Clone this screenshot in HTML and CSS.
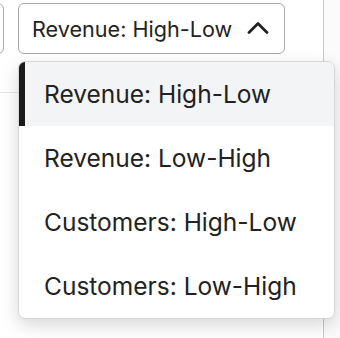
FILE: index.html
```html
<!DOCTYPE html>
<html lang="en">
  <head>
    <meta charset="UTF-8" />
    <meta name="viewport" content="width=device-width, initial-scale=1.0" />
    <title>Sort Menu</title>
    <link rel="stylesheet" href="styles.css">
  </head>
  <body>
    <div class="page">
      <div class="main">
        <div class="toolbar">
          <button class="btn btn-prev" type="button" aria-label="Filter"></button>
          <div class="sort">
            <button class="btn sort-btn" type="button">
              <span class="sort-label">Revenue: High-Low</span>
              <svg class="chevron" width="22" height="13" viewBox="0 0 22 13">
                <path d="M2 11.5 L11 2.5 L20 11.5" fill="none" stroke="#222" stroke-width="2.8" stroke-linecap="round" stroke-linejoin="round" />
              </svg>
            </button>
            <ul class="menu">
              <li class="menu-item active">Revenue: High-Low</li>
              <li class="menu-item">Revenue: Low-High</li>
              <li class="menu-item">Customers: High-Low</li>
              <li class="menu-item">Customers: Low-High</li>
            </ul>
          </div>
        </div>
        <div class="header-row"></div>
      </div>
      <div class="side"></div>
    </div>
  </body>
</html>
```

FILE: styles.css
```css
* {
  margin: 0;
  padding: 0;
  box-sizing: border-box;
  font-family: Inter, "Noto Sans", sans-serif;
}
body {
  background: white;
  color: #222;
  overflow: hidden;
}
.page {
  display: flex;
  width: 340px;
  height: 338px;
}
.main {
  width: 324px;
  border-right: 1px solid #c8c8c8;
}
.side {
  flex: 1;
  background: #fbfbfb;
}
.toolbar {
  display: flex;
  gap: 14px;
  padding-top: 3px;
  height: 93px;
  border-bottom: 1px solid #e6e6e6;
}
.btn {
  height: 51px;
  border: 1px solid #a8a8a8;
  border-radius: 6px;
  background: white;
  color: #222;
  font-size: 21.6px;
  cursor: pointer;
}
.btn-prev {
  width: 80px;
  margin-left: -76px;
}
.sort {
  position: relative;
}
.sort-btn {
  display: flex;
  align-items: center;
  justify-content: space-between;
  width: 267px;
  padding: 0 15px 0 13px;
}
.sort-label {
  white-space: nowrap;
}
.chevron {
  flex-shrink: 0;
  margin-top: -2px;
}
.menu {
  position: absolute;
  top: 58px;
  left: 0;
  width: 317px;
  list-style: none;
  background: white;
  border: 1px solid #d6d6d6;
  border-radius: 7px;
  overflow: hidden;
  box-shadow: 0 6px 18px rgba(0, 0, 0, 0.16);
  z-index: 10;
}
.menu-item {
  height: 64px;
  display: flex;
  align-items: center;
  padding-left: 19px;
  font-size: 24.5px;
  color: #222;
  border-left: 6px solid transparent;
}
.menu-item.active {
  background: #f3f4f6;
  border-left-color: #1a1a1a;
}
```
